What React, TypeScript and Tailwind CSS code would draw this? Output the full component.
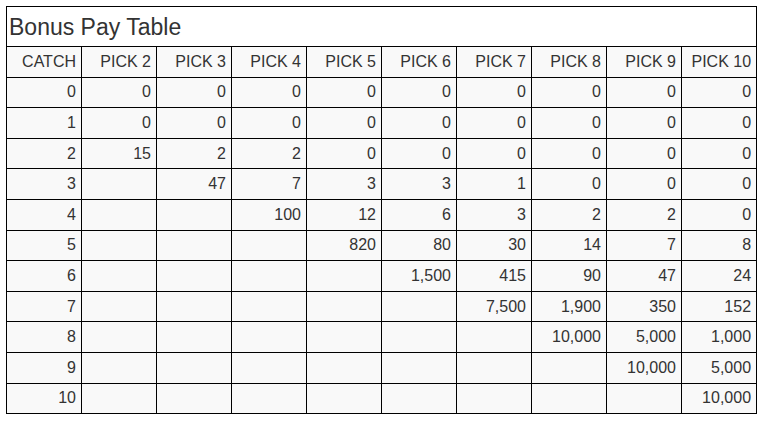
import React from "react";

const data: string[][] = [
  ["0", "0", "0", "0", "0", "0", "0", "0", "0", "0"],
  ["1", "0", "0", "0", "0", "0", "0", "0", "0", "0"],
  ["2", "15", "2", "2", "0", "0", "0", "0", "0", "0"],
  ["3", "", "47", "7", "3", "3", "1", "0", "0", "0"],
  ["4", "", "", "100", "12", "6", "3", "2", "2", "0"],
  ["5", "", "", "", "820", "80", "30", "14", "7", "8"],
  ["6", "", "", "", "", "1,500", "415", "90", "47", "24"],
  ["7", "", "", "", "", "", "7,500", "1,900", "350", "152"],
  ["8", "", "", "", "", "", "", "10,000", "5,000", "1,000"],
  ["9", "", "", "", "", "", "", "", "10,000", "5,000"],
  ["10", "", "", "", "", "", "", "", "", "10,000"],
];

const headers = ["CATCH", "PICK 2", "PICK 3", "PICK 4", "PICK 5", "PICK 6", "PICK 7", "PICK 8", "PICK 9", "PICK 10"];

export default function App() {
  return (
    <div className="w-[763px] h-[423px] bg-white p-[6px] text-[#333333]" style={{ fontFamily: '"Liberation Sans", Arial, sans-serif' }}>
      <table className="border-collapse table-fixed w-[751px]">
        <colgroup>
          {headers.map((h) => (
            <col key={h} className="w-[75px]" />
          ))}
        </colgroup>
        <thead>
          <tr className="h-[40px]">
            <th colSpan={10} className="border border-black bg-white text-left font-normal text-[23px] leading-none pl-[2px] pr-0 pt-[2px] align-middle">
              Bonus Pay Table
            </th>
          </tr>
          <tr className="h-[30.6px]">
            {headers.map((h) => (
              <th key={h} className="border border-black bg-[#f9f9f9] text-right font-normal text-[16px] leading-none pr-[5px] pl-0 align-middle whitespace-nowrap">
                {h}
              </th>
            ))}
          </tr>
        </thead>
        <tbody>
          {data.map((row, i) => (
            <tr key={i} className="h-[30.6px]">
              {row.map((c, j) => (
                <td key={j} className="border border-black bg-[#f9f9f9] text-right text-[16px] leading-none pr-[5px] pl-0 align-middle">
                  {c}
                </td>
              ))}
            </tr>
          ))}
        </tbody>
      </table>
    </div>
  );
}
